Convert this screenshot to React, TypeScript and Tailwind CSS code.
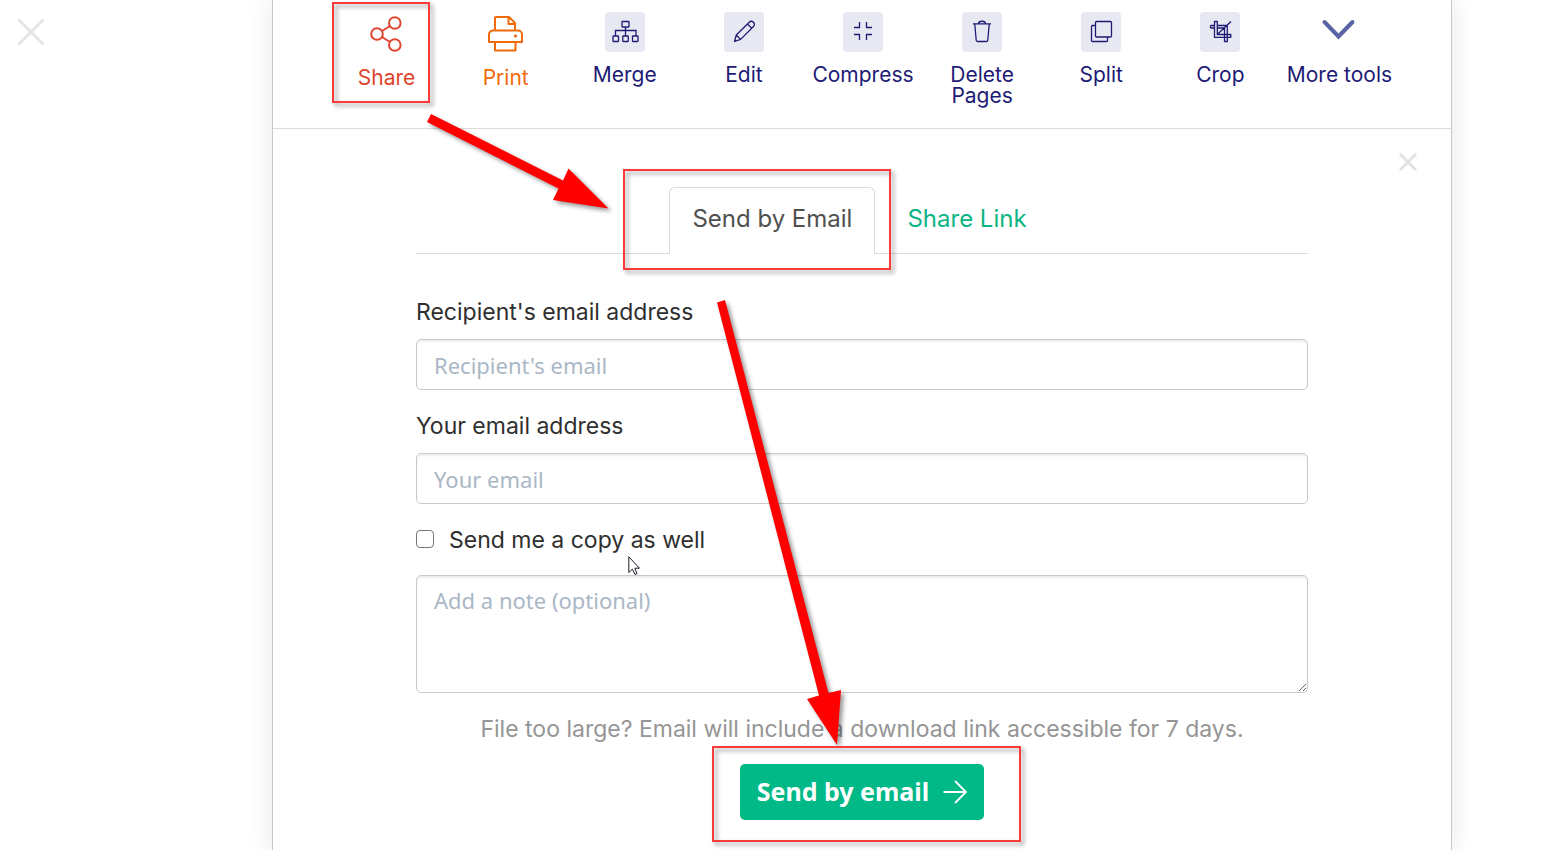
import type { ReactNode } from "react";

function Glyph({ children, width = 1 }: { children: ReactNode; width?: number }) {
  return (
    <svg
      viewBox="0 0 40 40"
      className="size-10"
      fill="none"
      stroke="currentColor"
      strokeWidth={width}
      aria-hidden="true"
    >
      {children}
    </svg>
  );
}

function Tile({ children }: { children: ReactNode }) {
  return (
    <span className="mt-3 flex size-10 items-center justify-center rounded bg-[#e8e8f3]">
      <Glyph width={1.3}>{children}</Glyph>
    </span>
  );
}

const tools: { label: string; color: string; gap: string; icon: ReactNode }[] = [
  {
    label: "Share",
    color: "text-[#e0442e]",
    gap: "gap-[13px]",
    icon: (
      <span className="mt-[14px]">
        <Glyph width={2}>
          <circle cx="10" cy="20" r="5.8" />
          <circle cx="27.8" cy="9" r="5.8" />
          <circle cx="27.8" cy="31" r="5.8" />
          <path d="M15 17l8-5M15 23l8 5" />
        </Glyph>
      </span>
    ),
  },
  {
    label: "Print",
    color: "text-[#f06a0a]",
    gap: "gap-[13px]",
    icon: (
      <span className="mt-[14px]">
        <Glyph width={2}>
          <path d="M9 16.5V4a1 1 0 0 1 1-1h13l6 6v7.500M22.500 3.500V10H29" strokeLinejoin="round" />
          <path d="M9 28H3v-7.500a4 4 0 0 1 4-4h25a4 4 0 0 1 4 4V28h-6.500z" strokeLinejoin="round" />
          <path d="M9 28h20.500v8.500H9z" strokeLinejoin="round" />
          <circle cx="29.500" cy="22" r="1.300" fill="currentColor" strokeWidth="0.6" />
        </Glyph>
      </span>
    ),
  },
  {
    label: "Merge",
    color: "text-[#1d1b74]",
    gap: "gap-3",
    icon: (
      <Tile>
        <rect x="17" y="9.500" width="7" height="5.500" rx="0.500" />
        <path d="M20.500 15v9M10.500 24v-5.500h20.500V24" />
        <rect x="8" y="24" width="5.500" height="5.500" rx="0.500" />
        <rect x="17.800" y="24" width="5.500" height="5.500" rx="0.500" />
        <rect x="27.500" y="24" width="5.500" height="5.500" rx="0.500" />
      </Tile>
    ),
  },
  {
    label: "Edit",
    color: "text-[#1d1b74]",
    gap: "gap-3",
    icon: (
      <Tile>
        <path
          d="M10.500 29.500l1.800-6.500L25.500 10a2.600 2.600 0 0 1 3.700 0l.5.500a2.600 2.600 0 0 1 0 3.700L16.600 27.400zM23.500 12l4.400 4.400M12.300 23l4.300 4.400M10.800 28.200l.9.900"
          strokeLinejoin="round"
        />
      </Tile>
    ),
  },
  {
    label: "Compress",
    color: "text-[#1d1b74]",
    gap: "gap-3",
    icon: (
      <Tile>
        <path d="M11 15.500h5.500V10M23.500 10v5.500H29M11 22.500h5.500V28M23.500 28v-5.500H29" />
      </Tile>
    ),
  },
  {
    label: "Delete Pages",
    color: "text-[#1d1b74]",
    gap: "gap-3",
    icon: (
      <Tile>
        <path
          d="M11 11.800h18M16.500 11.500c0-3 7-3 7 0M12.800 12l1.400 16.300a1.300 1.300 0 0 0 1.300 1.200h9a1.300 1.300 0 0 0 1.300-1.200L27.200 12"
          strokeLinejoin="round"
        />
      </Tile>
    ),
  },
  {
    label: "Split",
    color: "text-[#1d1b74]",
    gap: "gap-3",
    icon: (
      <Tile>
        <rect x="14.500" y="9.500" width="16" height="15.500" rx="1" />
        <path d="M14.500 13.500h-3a1 1 0 0 0-1 1v14a1 1 0 0 0 1 1h14a1 1 0 0 0 1-1V25" />
      </Tile>
    ),
  },
  {
    label: "Crop",
    color: "text-[#1d1b74]",
    gap: "gap-3",
    icon: (
      <Tile>
        <path
          d="M14.500 9.500h2.800v13h13.500v2.800H14.500zM10.500 13.500h4M10.500 16h4M10.500 13.500v2.500M17.300 13.500h10v16h-2.800V16h-7.200M17.300 22.500L31 9.500"
          strokeLinejoin="round"
        />
      </Tile>
    ),
  },
  {
    label: "More tools",
    color: "text-[#1d1b74]",
    gap: "gap-3",
    icon: (
      <span className="mt-3 text-[#5b63a5]">
        <Glyph width={4}>
          <path d="M5.500 10L19.500 24.500L33.500 10" strokeLinecap="round" />
        </Glyph>
      </span>
    ),
  },
];

function Cross({ className, width }: { className: string; width: number }) {
  return (
    <svg viewBox="0 0 28 28" className={className} stroke="currentColor" fill="none" aria-hidden="true">
      <path d="M1.500 1.500L26.500 26.500M26.500 1.500L1.500 26.500" strokeWidth={width} />
    </svg>
  );
}

const fieldClass =
  "block w-full rounded-[5px] border border-[#c9c9c9] bg-white px-[17px] font-['Noto_Sans',sans-serif] text-[22px] text-[#333] shadow-[inset_0_2px_2px_rgba(0,0,0,0.07)] placeholder:text-[#aab7c6] placeholder:opacity-100";

export default function App() {
  return (
    <div className="flex min-h-screen bg-white font-['Inter',sans-serif] text-[23px] text-[#2f2f2f]">
      <div className="w-[272px] shrink-0">
        <button type="button" aria-label="Close page" className="ml-[17px] mt-[18px] block text-[#e4e4e4]">
          <Cross className="size-7" width={3} />
        </button>
      </div>

      <main className="relative mr-[106px] min-w-0 flex-1 border-x border-[#c8c8c8] bg-white pb-[30px] shadow-[0_0_24px_rgba(0,0,0,0.1)]">
        <nav
          className="grid h-[129px] grid-cols-9 border-b border-[#dcdcdc] pl-[54px] pr-[52px] text-[21px]"
          aria-label="Document tools"
        >
          {tools.map((tool) => (
            <button
              key={tool.label}
              type="button"
              className={`flex flex-col items-center justify-start leading-[21px] ${tool.gap} ${tool.color}`}
            >
              {tool.icon}
              <span className={tool.label === "Delete Pages" ? "w-20" : "whitespace-nowrap"}>{tool.label}</span>
            </button>
          ))}
        </nav>

        <div className="flex h-[58px] items-start justify-end pr-[34px] pt-6">
          <button type="button" aria-label="Close panel" className="text-[#e2e2e2]">
            <Cross className="size-[18px]" width={4.5} />
          </button>
        </div>

        <section className="px-[143px]">
          <div role="tablist" className="flex justify-center gap-[10px] border-b border-[#dcdcdc] text-2xl">
            <button
              type="button"
              role="tab"
              aria-selected="true"
              className="-mb-px h-[67px] rounded-t-md border border-b-0 border-[#dcdcdc] bg-white px-[22px] pb-1 text-[#505050]"
            >
              Send by Email
            </button>
            <button type="button" role="tab" aria-selected="false" className="pb-[2px] pl-[22px] pr-7 text-[#0bb583]">
              Share Link
            </button>
          </div>

          <form className="pt-10" onSubmit={(e) => e.preventDefault()}>
            <label htmlFor="recipient" className="mb-[9px] block leading-9">
              Recipient's email address
            </label>
            <input id="recipient" type="email" placeholder="Recipient's email" className={`h-[51px] ${fieldClass}`} />

            <label htmlFor="sender" className="mb-[9px] mt-[18px] block leading-9">
              Your email address
            </label>
            <input id="sender" type="email" placeholder="Your email" className={`h-[51px] ${fieldClass}`} />

            <div className="mb-[17px] mt-[18px] flex items-center gap-[15px]">
              <input
                id="copy"
                type="checkbox"
                className="mb-[2px] size-[18px] appearance-none rounded-[4px] border-[1.5px] border-[#767676] bg-white checked:border-[#00b987] checked:bg-[#00b987]"
              />
              <label htmlFor="copy" className="leading-9">
                Send me a copy as well
              </label>
            </div>

            <textarea
              aria-label="Note"
              placeholder="Add a note (optional)"
              className={`h-[118px] resize py-2 leading-8 ${fieldClass}`}
            />

            <p className="mt-[18px] text-center leading-9 text-[#959595]">
              File too large? Email will include a download link accessible for 7 days.
            </p>
            <button
              type="submit"
              className="mx-auto mt-[17px] flex h-14 items-center gap-[14px] rounded-[5px] bg-[#00b987] px-[17px] font-['Noto_Sans',sans-serif] text-[25px] font-bold text-white"
            >
              Send by email
              <svg viewBox="0 0 24 24" className="size-6" fill="none" stroke="currentColor" strokeWidth="1.8" aria-hidden="true">
                <path d="M0.500 12H23M12 1L23 12L12 23" />
              </svg>
            </button>
          </form>
        </section>

        <svg
          viewBox="0 0 1178 850"
          width="1178"
          height="850"
          className="pointer-events-none absolute left-0 top-0 drop-shadow-[3px_3px_2px_rgba(0,0,0,0.4)]"
          aria-hidden="true"
        >
          <g fill="none" stroke="#fb3a3a" strokeWidth="2">
            <rect x="60" y="3" width="96" height="99" />
            <rect x="351" y="170" width="266" height="99" />
            <rect x="440" y="747" width="307" height="94" />
          </g>
          <g fill="#ff0000">
            <path d="M158 114L290 180.500L295.500 168.500L335.500 208.500L280 200L285.500 188.500L154 122Z" />
            <path d="M452 300L555.500 693L568 690L564 745L534 699L546 695.500L444 302.500Z" />
          </g>
        </svg>
        <svg
          viewBox="0 0 14 20"
          width="14"
          height="20"
          className="pointer-events-none absolute left-[355px] top-[556px]"
          aria-hidden="true"
        >
          <path d="M0.800 0.800V16.500L4.300 13.200L7 18.500L9 17.500L6.800 12.200H11.500Z" fill="#fff" stroke="#1c1c2c" />
        </svg>
      </main>
    </div>
  );
}
